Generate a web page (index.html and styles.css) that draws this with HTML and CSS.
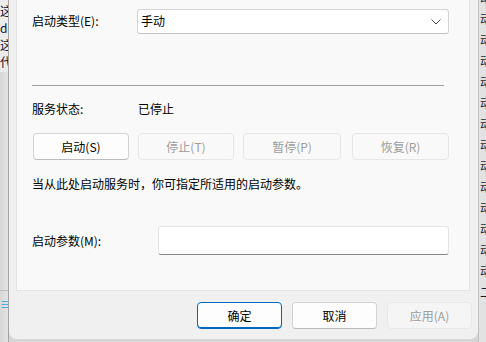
FILE: index.html
```html
<!DOCTYPE html>
<html lang="zh-CN">
<head>
<meta charset="utf-8">
<title>服务属性</title>
<link rel="stylesheet" href="styles.css">
</head>
<body>
<div class="desk">
  <div class="bg-left">
    <div class="bg-left-list">
      <span>这</span>
      <span>do</span>
      <span>这</span>
      <span>代</span>
    </div>
    <div class="bg-left-fill"></div>
    <div class="bg-left-foot"><span class="blue">≡</span><span class="slash">/</span></div>
  </div>

  <div class="dialog">
    <div class="panel">
      <div class="row row-type">
        <span class="label label-type">启动类型(E):</span>
        <div class="combo">
          <span>手动</span>
          <svg class="chev" width="10" height="6" viewBox="0 0 10 6"><polyline points="0.5,0.5 5,5 9.5,0.5" fill="none" stroke="#4a4a4a" stroke-width="1"/></svg>
        </div>
      </div>
      <div class="sep"></div>
      <div class="row row-status">
        <span class="label label-status">服务状态:</span>
        <span>已停止</span>
      </div>
      <div class="btns">
        <button class="btn b1">启动(S)</button>
        <button class="btn b2 disabled">停止(T)</button>
        <button class="btn b3 disabled">暂停(P)</button>
        <button class="btn b4 disabled">恢复(R)</button>
      </div>
      <p class="hint">当从此处启动服务时，你可指定所适用的启动参数。</p>
      <div class="row row-param">
        <span class="label label-param">启动参数(M):</span>
        <div class="input"></div>
      </div>
    </div>
    <div class="footer">
      <button class="btn fbtn primary">确定</button>
      <button class="btn fbtn">取消</button>
      <button class="btn fbtn disabled">应用(A)</button>
    </div>
  </div>

  <div class="bg-right">
    <span>动</span><span>动</span><span>动</span><span>动</span><span>动</span><span>动</span><span>动</span><span>动</span><span>动</span><span>动</span><span>动</span><span>动</span><span>动</span><span>动</span><span>二</span>
  </div>
</div>
</body>
</html>
```

FILE: styles.css
```css
* { box-sizing: border-box; }
html, body { margin: 0; padding: 0; }
body {
  width: 486px;
  height: 342px;
  overflow: hidden;
  background: #d6d6d6;
  font-family: "Noto Sans CJK SC", "Noto Sans", sans-serif;
  font-size: 12px;
  color: #000;
}
.desk {
  display: flex;
  height: 342px;
  align-items: flex-start;
}

/* background window, left */
.bg-left {
  width: 9px;
  height: 342px;
  flex: none;
  display: flex;
  flex-direction: column;
  border-right: 1px solid #a3a3a3;
  background: linear-gradient(to right, #d7d7d7, #e3e3e3);
  overflow: hidden;
}
.bg-left-list {
  display: flex;
  flex-direction: column;
  padding-top: 2px;
  height: 72px;
  line-height: 17px;
  white-space: nowrap;
  background: #ebebeb;
  color: #101030;
}
.bg-left-fill { height: 218px; }
.bg-left-foot {
  border-top: 1px solid #bdbdbd;
  padding-top: 6px;
  display: flex;
  line-height: 14px;
  white-space: nowrap;
}
.bg-left-foot .blue { color: #2aa5d8; font-size: 11px; }
.bg-left-foot .slash { color: #555; margin-left: -1px; }

/* dialog */
.dialog {
  width: 469px;
  height: 339px;
  flex: none;
  background: #f0f0f0;
  border-radius: 0 0 8px 8px;
  display: flex;
  flex-direction: column;
}
.panel {
  margin: 0 8px 0 7px;
  height: 291px;
  background: #f9f9f9;
  border: 1px solid #e3e3e3;
  border-top: none;
  padding-left: 15px;
  display: flex;
  flex-direction: column;
}
.row {
  display: flex;
  align-items: center;
  line-height: 18px;
}
.label { flex: none; }
.row-type { margin-top: 9px; height: 24px; }
.label-type { width: 105px; }
.combo {
  width: 312px;
  height: 25px;
  background: #fff;
  border: 1px solid #d4d4d4;
  border-bottom-color: #c2c2c2;
  border-radius: 3px;
  display: flex;
  align-items: center;
  justify-content: space-between;
  padding: 0 7px 0 3px;
}
.chev { display: block; margin-top: 1px; }
.sep {
  margin-top: 52px;
  width: 412px;
  height: 1px;
  background: #a0a0a0;
}
.row-status { margin-top: 14px; height: 18px; }
.label-status { width: 106px; }

.btns {
  margin-top: 15px;
  margin-left: 1px;
  display: flex;
  gap: 9px;
}
.btn {
  font-family: inherit;
  font-size: 12px;
  line-height: 16px;
  color: #000;
  height: 27px;
  padding: 0;
  background: #fdfdfd;
  border: 1px solid #d3d3d3;
  border-bottom-color: #bababa;
  border-radius: 4px;
}
.btn.disabled {
  background: #f9f9f9;
  color: #9d9d9d;
  border-color: #e6e6e6;
}
.b1, .b2 { width: 96px; }
.b3 { width: 98px; }
.b4 { width: 97px; margin-left: 2px; }

.hint {
  margin: 15px 0 0 0;
  line-height: 18px;
}
.row-param { margin-top: 33px; height: 29px; }
.label-param { width: 126px; }
.input {
  width: 291px;
  height: 29px;
  background: #fff;
  border: 1px solid #e5e5e5;
  border-bottom-color: #868686;
  border-radius: 3px;
}

.footer {
  display: flex;
  justify-content: flex-end;
  gap: 10px;
  padding: 11px 6px 0 0;
}
.fbtn { width: 85px; }
.fbtn.disabled { background: #f5f5f5; border-color: #e8e8e8; }
.primary {
  border-color: #0067c0;
  box-shadow: inset 0 -1px 0 #0067c0;
}

/* background window, right */
.bg-right {
  width: 8px;
  height: 342px;
  flex: none;
  overflow: hidden;
  background: #e2e2e2;
  border-left: 1px solid #c4c4c4;
  padding-left: 1px;
  display: flex;
  flex-direction: column;
  line-height: 21px;
  color: #1a1a2a;
  white-space: nowrap;
}
.bg-right span:first-child { margin-top: -13px; }
```
